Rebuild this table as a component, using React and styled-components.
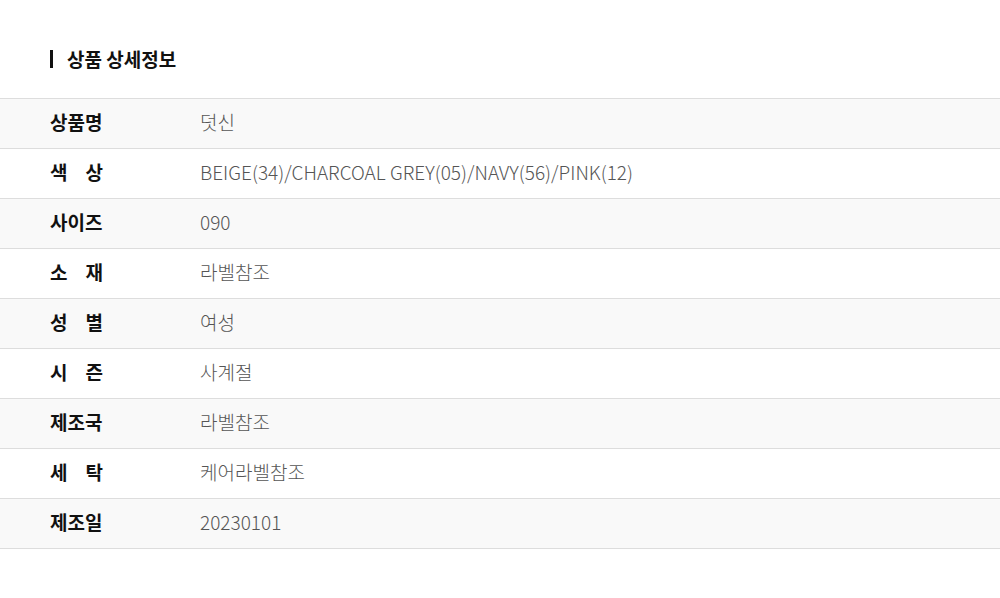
import React from "react";
import styled, { createGlobalStyle } from "styled-components";

const Global = createGlobalStyle`
  body {
    margin: 0;
    background: #fff;
    font-family: "Noto Sans CJK KR", "Noto Sans", sans-serif;
  }
`;

const Wrap = styled.div`
  padding-top: 46px;
`;

const Title = styled.h3`
  margin: 0 0 26px 50px;
  display: flex;
  align-items: center;
  gap: 14px;
  font-size: 19px;
  font-weight: 700;
  color: #111;
  line-height: 26px;

  &::before {
    content: "";
    width: 3px;
    height: 18px;
    background: #111;
  }
`;

const Table = styled.div`
  border-top: 1px solid #ddd;
`;

const Row = styled.div`
  display: flex;
  align-items: center;
  box-sizing: border-box;
  height: 50px;
  padding-bottom: 4px;
  border-bottom: 1px solid #ddd;
  background: ${(p) => (p.$shade ? "#f9f9f9" : "#fff")};
  line-height: 1;
`;

const Label = styled.div`
  flex: none;
  width: 53px;
  margin: 0 97px 0 50px;
  white-space: nowrap;
  font-size: 19px;
  font-weight: 700;
  color: #111;
  text-align: justify;
  text-align-last: justify;
`;

const Value = styled.div`
  font-size: 19px;
  font-weight: 300;
  color: #555;
`;

const rows = [
  ["상품명", "덧신"],
  ["색 상", "BEIGE(34)/CHARCOAL GREY(05)/NAVY(56)/PINK(12)"],
  ["사이즈", "090"],
  ["소 재", "라벨참조"],
  ["성 별", "여성"],
  ["시 즌", "사계절"],
  ["제조국", "라벨참조"],
  ["세 탁", "케어라벨참조"],
  ["제조일", "20230101"],
];

export default function App() {
  return (
    <>
      <Global />
      <Wrap>
        <Title>상품 상세정보</Title>
        <Table>
          {rows.map(([k, v], i) => (
            <Row key={k} $shade={i % 2 === 0}>
              <Label>{k}</Label>
              <Value>{v}</Value>
            </Row>
          ))}
        </Table>
      </Wrap>
    </>
  );
}
